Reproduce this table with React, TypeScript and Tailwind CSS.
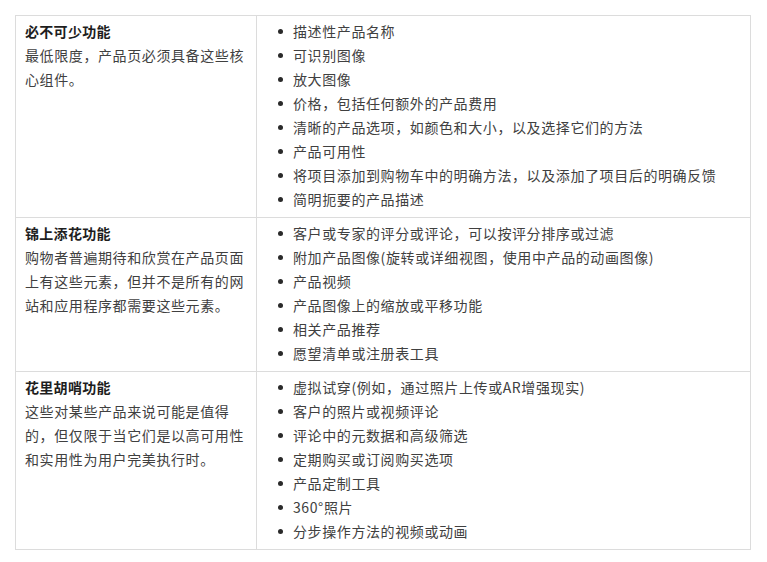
import React from "react";

type Row = { title: string; desc: string; items: string[] };

const rows: Row[] = [
  {
    title: "必不可少功能",
    desc: "最低限度，产品页必须具备这些核心组件。",
    items: [
      "描述性产品名称",
      "可识别图像",
      "放大图像",
      "价格，包括任何额外的产品费用",
      "清晰的产品选项，如颜色和大小，以及选择它们的方法",
      "产品可用性",
      "将项目添加到购物车中的明确方法，以及添加了项目后的明确反馈",
      "简明扼要的产品描述",
    ],
  },
  {
    title: "锦上添花功能",
    desc: "购物者普遍期待和欣赏在产品页面上有这些元素，但并不是所有的网站和应用程序都需要这些元素。",
    items: [
      "客户或专家的评分或评论，可以按评分排序或过滤",
      "附加产品图像(旋转或详细视图，使用中产品的动画图像)",
      "产品视频",
      "产品图像上的缩放或平移功能",
      "相关产品推荐",
      "愿望清单或注册表工具",
    ],
  },
  {
    title: "花里胡哨功能",
    desc: "这些对某些产品来说可能是值得的，但仅限于当它们是以高可用性和实用性为用户完美执行时。",
    items: [
      "虚拟试穿(例如，通过照片上传或AR增强现实)",
      "客户的照片或视频评论",
      "评论中的元数据和高级筛选",
      "定期购买或订阅购买选项",
      "产品定制工具",
      "360°照片",
      "分步操作方法的视频或动画",
    ],
  },
];

export default function App() {
  return (
    <div className="w-[767px] h-[562px] bg-white pt-[15px] pl-[15px]">
      <div
        className="w-[736px] border border-[#dcdcdc] text-[14px] leading-[24px] tracking-[0.6px] text-[#404040]"
        style={{ fontFamily: '"Noto Sans CJK SC", "Noto Sans", sans-serif' }}
      >
        {rows.map((r, i) => (
          <div
            key={i}
            className={`grid grid-cols-[241px_1fr] ${i > 0 ? "border-t border-[#dcdcdc]" : ""}`}
          >
            <div className="border-r border-[#dcdcdc] pl-[9px] pr-[6px] pt-[3px] pb-[6px]">
              <div className="font-bold text-[#1e1e1e] tracking-[0.3px]">{r.title}</div>
              <div className="break-all" style={{ lineBreak: "strict" }}>{r.desc}</div>
            </div>
            <ul className="pt-[3px] pb-[6px] pl-[21px]">
              {r.items.map((it, j) => (
                <li key={j} className="flex items-center">
                  <span className="w-[5px] h-[5px] rounded-full bg-[#2a2a2a] mr-[10px] shrink-0" />
                  <span>{it}</span>
                </li>
              ))}
            </ul>
          </div>
        ))}
      </div>
    </div>
  );
}
